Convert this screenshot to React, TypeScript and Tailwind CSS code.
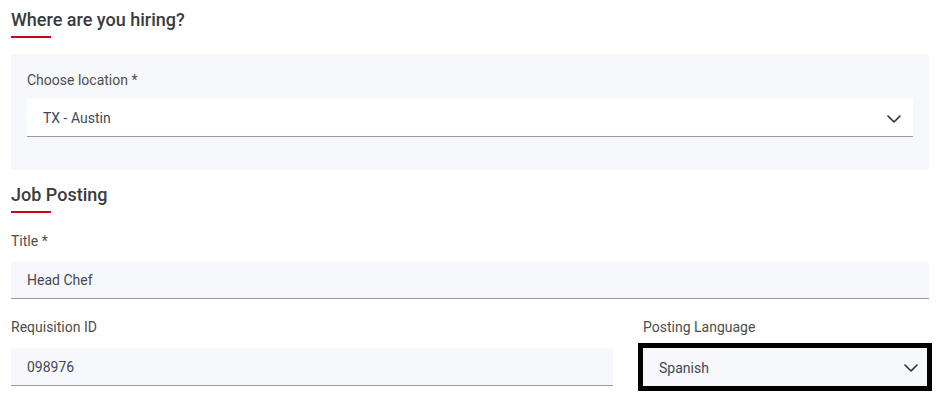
import { type ReactNode } from 'react'

const font = { fontFamily: 'Roboto, "Noto Sans", Arial, sans-serif' }

function Chevron({ className = '' }: { className?: string }) {
  return (
    <svg width="14" height="8" viewBox="0 0 14 8" fill="none" stroke="#2f2f2f" strokeWidth="1.6" strokeLinecap="round" strokeLinejoin="round" className={className}>
      <polyline points="1,1 7,7 13,1" />
    </svg>
  )
}

function SectionTitle({ children }: { children: ReactNode }) {
  return (
    <div>
      <h2 className="text-[18px] leading-6 font-medium text-[#3b3b3b]">{children}</h2>
      <div className="mt-1 h-[2px] w-10 bg-[#d0021b]" />
    </div>
  )
}

function Label({ children }: { children: ReactNode }) {
  return <div className="text-[14px] leading-5 text-[#4d4d4d]">{children}</div>
}

function TextField({ value }: { value: string }) {
  return (
    <div className="h-[38px] flex items-center px-4 pt-[2px] bg-[#f7f8fc] border-b border-[#9a9a9a] text-[14px] text-[#434856]">
      {value}
    </div>
  )
}

export default function App() {
  return (
    <div style={font} className="bg-white w-[943px] h-[403px] overflow-hidden">
      <div className="pl-[11px] pt-2 w-[929px]">
        <SectionTitle>Where are you hiring?</SectionTitle>

        <div className="mt-4 bg-[#f7f8fc] px-4 pt-4 pb-[33px]">
          <Label>Choose location *</Label>
          <div className="mt-[9px] h-[38px] flex items-center justify-between pl-4 pr-3 pt-[2px] bg-white border-b border-[#9a9a9a] text-[14px] text-[#434856]">
            <span>TX - Austin</span>
            <Chevron />
          </div>
        </div>

        <div className="mt-[13px]">
          <SectionTitle>Job Posting</SectionTitle>
        </div>

        <div className="mt-[18px]">
          <Label>Title *</Label>
          <div className="mt-[10px]">
            <TextField value="Head Chef" />
          </div>
        </div>

        <div className="mt-[18px] grid grid-cols-[602px_284px] gap-x-[30px]">
          <div>
            <Label>Requisition ID</Label>
            <div className="mt-[11px]">
              <TextField value="098976" />
            </div>
          </div>
          <div>
            <Label>Posting Language</Label>
            <div className="mt-[11px] h-[38px] flex items-center justify-between pl-4 pr-[9px] pt-[2px] bg-[#f7f8fc] outline-solid outline-[5px] outline-black text-[14px] text-[#434856]">
              <span>Spanish</span>
              <Chevron />
            </div>
          </div>
        </div>
      </div>
    </div>
  )
}
